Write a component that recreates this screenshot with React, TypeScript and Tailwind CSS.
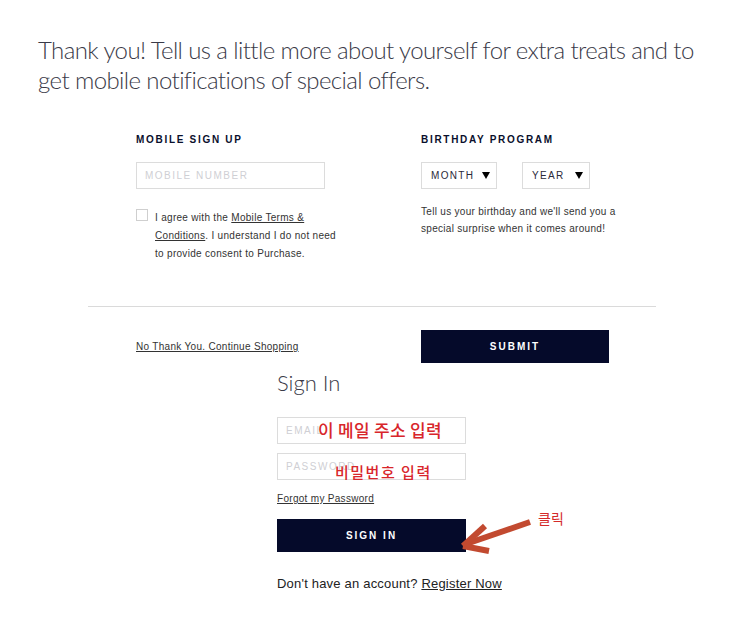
import React from "react";

const sans = { fontFamily: '"Liberation Sans", Arial, sans-serif' };
const lato = { fontFamily: 'Lato, "Open Sans", sans-serif' };
const kr = { fontFamily: '"Noto Sans CJK KR", "Noto Sans", sans-serif' };

function Tri() {
  return (
    <svg width="8" height="7" viewBox="0 0 8 7" className="shrink-0">
      <path d="M0 0 H8 L4 7 Z" fill="#000" />
    </svg>
  );
}

export default function App() {
  return (
    <div className="relative w-[740px] h-[636px] bg-white overflow-hidden" style={sans}>
      <h1
        className="pl-[38px] pt-[35px] pr-[30px] text-[24px] leading-[30px] font-light tracking-[-0.6px] text-[#3a3a48]"
        style={lato}
      >
        Thank you! Tell us a little more about yourself for extra treats and to get mobile notifications of special offers.
      </h1>

      <div className="flex mt-[39px] pl-[136px]">
        <div className="w-[285px]">
          <div className="text-[10px] leading-[12px] font-bold tracking-[1.7px] text-[#0a0f2c]">MOBILE SIGN UP</div>
          <div className="mt-[16px] w-[189px] h-[27px] border border-[#dcdcdc] flex items-center pl-[8px] text-[10px] tracking-[1.5px] text-[#cfcfd4]">
            MOBILE NUMBER
          </div>
          <div className="flex mt-[19px]">
            <div className="w-[12px] h-[12px] border border-[#cfcfcf] mt-[1px] shrink-0" />
            <p className="ml-[7px] w-[190px] text-[10px] leading-[18px] tracking-[0.3px] text-[#333] mt-[1px]">
              I agree with the <span className="underline">Mobile Terms &amp; Conditions</span>. I understand I do not need to provide consent to Purchase.
            </p>
          </div>
        </div>
        <div>
          <div className="text-[10px] leading-[12px] font-bold tracking-[1.7px] text-[#0a0f2c]">BIRTHDAY PROGRAM</div>
          <div className="flex mt-[16px] gap-[25px]">
            <div className="w-[76px] h-[27px] border border-[#dcdcdc] flex items-center justify-between pl-[9px] pr-[6px] text-[10px] tracking-[1.3px] text-[#2a2a3a]">
              <span>MONTH</span>
              <Tri />
            </div>
            <div className="w-[68px] h-[27px] border border-[#dcdcdc] flex items-center justify-between pl-[9px] pr-[6px] text-[10px] tracking-[1.3px] text-[#2a2a3a]">
              <span>YEAR</span>
              <Tri />
            </div>
          </div>
          <p className="mt-[14px] w-[200px] text-[10px] leading-[17px] tracking-[0.3px] text-[#333]">
            Tell us your birthday and we'll send you a special surprise when it comes around!
          </p>
        </div>
      </div>

      <div className="mt-[43px] ml-[88px] w-[568px] h-px bg-[#dadada]" />

      <div className="flex items-center mt-[23px] pl-[136px]">
        <div className="w-[285px] text-[10px] tracking-[0.3px] text-[#333] underline">No Thank You. Continue Shopping</div>
        <div className="w-[188px] h-[33px] bg-[#050a2a] flex items-center justify-center text-white text-[10px] font-bold tracking-[2px]">
          SUBMIT
        </div>
      </div>

      <div className="relative pl-[277px]">
        <div className="mt-[5px] text-[22px] leading-[30px] font-light text-[#3a3a48]" style={lato}>Sign In</div>
        <div className="relative mt-[19px] w-[189px] h-[27px] border border-[#dcdcdc] flex items-center pl-[8px] text-[10px] tracking-[1.5px] text-[#cfcfd4]">
          EMAIL
          <span className="absolute left-[40px] top-[2px] text-[17px] leading-[20px] font-medium tracking-[0.3px] text-[#d8262b]" style={kr}>이 메일 주소 입력</span>
        </div>
        <div className="relative mt-[9px] w-[189px] h-[27px] border border-[#dcdcdc] flex items-center pl-[8px] text-[10px] tracking-[1.5px] text-[#cfcfd4]">
          PASSWORD
          <span className="absolute left-[57px] top-[8px] text-[15px] leading-[20px] font-medium text-[#d8262b]" style={kr}>비밀번호 입력</span>
        </div>
        <div className="mt-[11px] text-[10px] tracking-[0.3px] text-[#333] underline">Forgot my Password</div>
        <div className="mt-[13px] w-[189px] h-[33px] bg-[#050a2a] flex items-center justify-center text-white text-[10px] font-bold tracking-[2px]">
          SIGN IN
        </div>
        <div className="mt-[22px] text-[13px] tracking-[0.2px] text-[#222]">
          Don't have an account? <span className="underline">Register Now</span>
        </div>
      </div>

      <span className="absolute left-[538px] top-[509px] text-[14px] leading-[18px] text-[#d42a2a]" style={kr}>클릭</span>
      <svg className="absolute left-0 top-0" width="740" height="636" viewBox="0 0 740 636">
        <g stroke="#c24a30" strokeWidth="6" strokeLinecap="butt" fill="none">
          <line x1="530" y1="522" x2="466" y2="544" />
          <line x1="463" y1="546" x2="485" y2="526" />
          <line x1="463" y1="546" x2="489" y2="551" />
        </g>
      </svg>
    </div>
  );
}
